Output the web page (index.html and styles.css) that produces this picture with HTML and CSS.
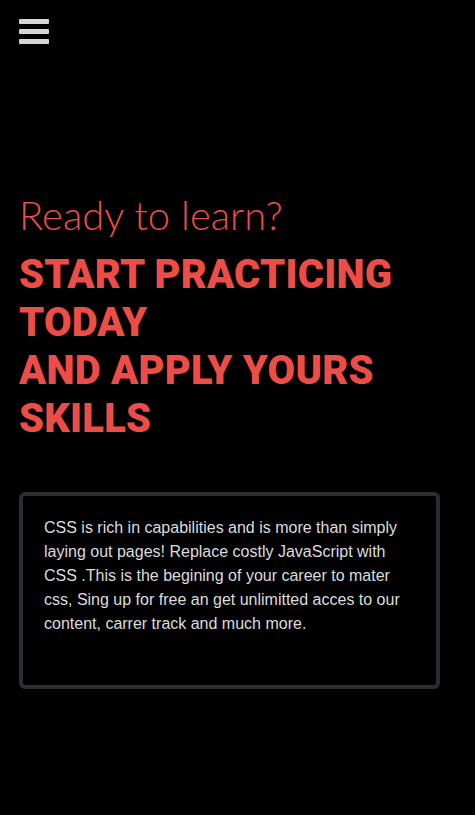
FILE: index.html
```html
<!DOCTYPE html>
<html lang="en">
<head>
<meta charset="utf-8">
<title>Ready to learn?</title>
<link rel="stylesheet" href="styles.css">
</head>
<body>
<header class="topbar">
  <button class="menu-btn" aria-label="Menu">
    <span class="bar"></span>
    <span class="bar"></span>
    <span class="bar"></span>
  </button>
</header>
<main class="hero">
  <h2 class="hero-sub">Ready to learn?</h2>
  <h1 class="hero-title">START PRACTICING TODAY<br>AND APPLY YOURS SKILLS</h1>
  <div class="info-card">
    <p class="info-text">CSS is rich in capabilities and is more than simply laying out pages! Replace costly JavaScript with CSS .This is the begining of your career to mater css, Sing up for free an get unlimitted acces to our content, carrer track and much more.</p>
  </div>
</main>
</body>
</html>
```
FILE: styles.css
```css
* { box-sizing: border-box; }
html, body { background: #000; }
body {
  margin: 0;
  font-family: "Liberation Sans", Arial, sans-serif;
  color: #ddd;
}
.topbar {
  padding: 19px 19px 0;
}
.menu-btn {
  display: flex;
  flex-direction: column;
  gap: 5px;
  padding: 0;
  border: 0;
  background: none;
  cursor: pointer;
}
.bar {
  display: block;
  width: 30px;
  height: 5px;
  background: #d6d6d6;
  border-radius: 1px;
}
.hero {
  padding: 147px 19px 0;
}
.hero-sub {
  margin: 0;
  font-family: Lato, sans-serif;
  font-weight: 300;
  font-size: 40px;
  line-height: 48px;
  color: #ec4e47;
}
.hero-title {
  margin: 12px 0 0;
  font-family: Roboto, sans-serif;
  font-weight: 900;
  font-size: 40px;
  line-height: 48px;
  letter-spacing: 0.2px;
  color: #ec4e47;
  max-width: 410px;
}
.info-card {
  margin: 49px 16px 0 0;
  border: 4px solid #2b2d33;
  border-radius: 6px;
  padding: 20px 21px 49px;
}
.info-text {
  margin: 0;
  font-size: 16px;
  line-height: 24px;
  color: #dcdcdc;
}
```
